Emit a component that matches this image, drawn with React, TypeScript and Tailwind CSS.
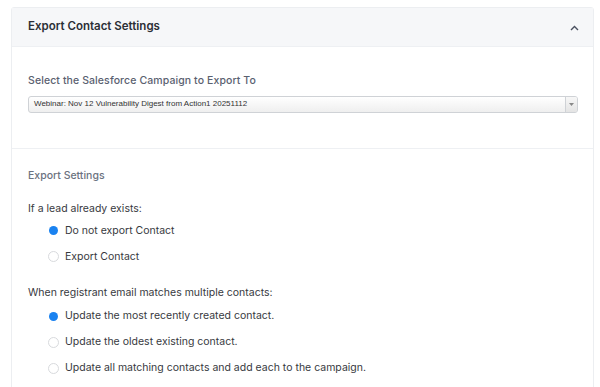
import React from "react";

function Radio({ checked, label }: { checked?: boolean; label: string }) {
  return (
    <div className="flex items-center h-[26px]">
      {checked ? (
        <span className="w-[11px] h-[11px] rounded-full flex items-center justify-center">
          <span className="w-[9px] h-[9px] rounded-full bg-[#1a82f0]" />
        </span>
      ) : (
        <span className="w-[11px] h-[11px] rounded-full border border-[#d8dadd] bg-white" />
      )}
      <span className="ml-[6px] text-[10.5px] text-[#37393e]">{label}</span>
    </div>
  );
}

export default function App() {
  return (
    <div
      className="w-[600px] h-[387px] bg-white overflow-hidden pt-[7px] pl-[11px] pr-[6px]"
      style={{ fontFamily: "Inter, 'Noto Sans', sans-serif" }}
    >
      <div className="border border-[#eceef1] rounded-t-[3px] h-[420px]">
        <div className="h-[39px] bg-[#f6f7f9] border-b border-[#eef0f3] flex items-center justify-between pl-[16px] pr-[14px]">
          <span className="text-[11.5px] font-semibold text-[#2b2f36]">Export Contact Settings</span>
          <svg width="9" height="6" viewBox="0 0 9 6" className="mt-[1px]">
            <path d="M1 5 L4.5 1.5 L8 5" fill="none" stroke="#4a5060" strokeWidth="1.4" />
          </svg>
        </div>
        <div className="pl-[16px] pr-[15px] pt-[26px] h-[102px] border-b border-[#eef0f3]">
          <div className="text-[10.5px] font-medium text-[#5a6170] tracking-[0.1px]">
            Select the Salesforce Campaign to Export To
          </div>
          <div className="mt-[7px] h-[17px] flex rounded-[3px] border border-[#cfd2d6] bg-gradient-to-b from-white to-[#efefef] overflow-hidden">
            <div
              className="flex-1 flex items-center pl-[5px] text-[8px] text-[#333]"
              style={{ fontFamily: "'Liberation Sans', Arial, sans-serif" }}
            >
              Webinar: Nov 12 Vulnerability Digest from Action1 20251112
            </div>
            <div className="w-[12px] border-l border-[#cfd2d6] flex items-center justify-center bg-gradient-to-b from-[#f7f7f7] to-[#e4e4e4]">
              <svg width="5" height="3" viewBox="0 0 5 3">
                <path d="M0 0 L5 0 L2.5 3 Z" fill="#888" />
              </svg>
            </div>
          </div>
        </div>
        <div className="pl-[16px] pt-[19px]">
          <div className="text-[10.5px] font-medium text-[#6b7280]">Export Settings</div>
          <div className="mt-[17px] text-[10.5px] text-[#37393e]">If a lead already exists:</div>
          <div className="pl-[20px] mt-[1px]">
            <Radio checked label="Do not export Contact" />
            <Radio label="Export Contact" />
          </div>
          <div className="mt-[15px] text-[10.5px] text-[#37393e]">When registrant email matches multiple contacts:</div>
          <div className="pl-[20px] mt-[3px]">
            <Radio checked label="Update the most recently created contact." />
            <Radio label="Update the oldest existing contact." />
            <Radio label="Update all matching contacts and add each to the campaign." />
          </div>
        </div>
      </div>
    </div>
  );
}
